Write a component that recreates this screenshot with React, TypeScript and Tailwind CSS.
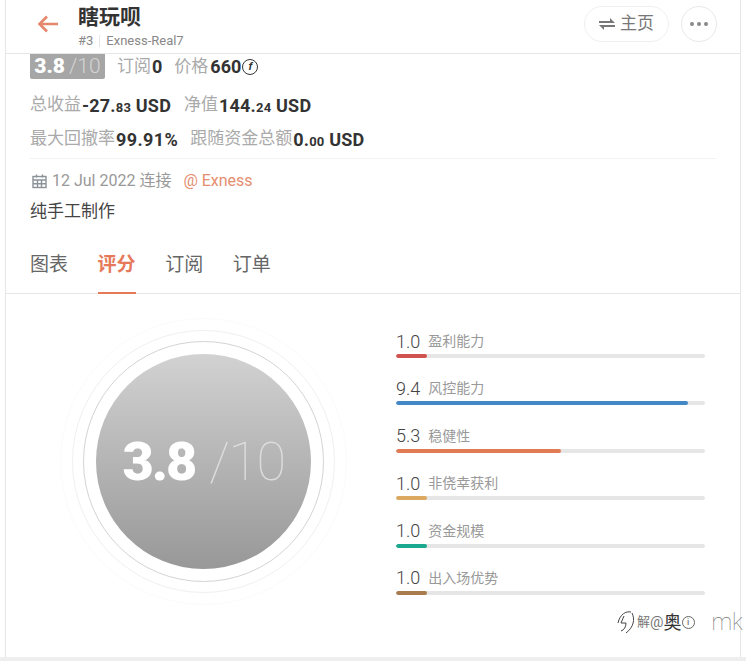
const FONT = "font-['Roboto','Noto_Sans_CJK_SC',sans-serif]";

const scores = [
  { value: "1.0", label: "盈利能力", width: "w-[10%]", color: "bg-[#d0534f]" },
  { value: "9.4", label: "风控能力", width: "w-[94.6%]", color: "bg-[#4288c5]" },
  { value: "5.3", label: "稳健性", width: "w-[53.4%]", color: "bg-[#e07b54]" },
  { value: "1.0", label: "非侥幸获利", width: "w-[10%]", color: "bg-[#dba95f]" },
  { value: "1.0", label: "资金规模", width: "w-[10%]", color: "bg-[#1aa88f]" },
  { value: "1.0", label: "出入场优势", width: "w-[10%]", color: "bg-[#a97c50]" },
];

const Money = ({ whole, cents }: { whole: string; cents: string }) => (
  <span className="font-bold text-[#333] text-[18px] tracking-[0.2px] ml-[1px] whitespace-nowrap">
    {whole}
    <span className="text-[13px]">{cents}</span> USD
  </span>
);

const App = () => {
  return (
    <div className={`${FONT} relative w-[751px] h-[661px] bg-white overflow-hidden pl-[5px] pr-[10px]`}>
      <div className="h-[657px] border-x border-[#e6e6e6] bg-white">
        <header className="h-[54px] border-b border-[#e6e6e6] flex items-center pl-[31px] pr-[23px]">
          <svg width="22" height="18" viewBox="0 0 22 18" fill="none" stroke="#e5876a" strokeWidth="2.6" className="mt-[-6px]">
            <path d="M21 9H2.5M10 1.5 2.5 9l7.5 7.5" />
          </svg>
          <div className="ml-[19px] flex flex-col mt-[-3px]">
            <div className="text-[21px] leading-[28px] font-bold text-[#333]">瞎玩呗</div>
            <div className="text-[13px] leading-[14px] mt-[3px] text-[#888] flex items-center">
              <span>#3</span>
              <span className="w-px h-[12px] bg-[#e6e6e6] mx-[6px]" />
              <span>Exness-Real7</span>
            </div>
          </div>
          <div className="ml-auto flex items-center gap-[12px] mt-[-5px]">
            <div className="h-[36px] w-[85px] rounded-full border border-[#f0f0f0] flex items-center justify-center gap-[5px] text-[#777] text-[17px]">
              <svg width="16" height="12" viewBox="0 0 16 12" fill="#777">
                <path d="M0 3h11V0l5 5H0zM0 7h16v2H5v3z" />
              </svg>
              <span>主页</span>
            </div>
            <div className="size-[36px] rounded-full border border-[#e8e8e8] flex items-center justify-center gap-[2.5px]">
              <span className="size-[4.5px] rounded-full bg-[#888]" />
              <span className="size-[4.5px] rounded-full bg-[#888]" />
              <span className="size-[4.5px] rounded-full bg-[#888]" />
            </div>
          </div>
        </header>

        <section className="px-[24px]">
          <div className="flex items-center h-[25px] text-[17px] text-[#aaa]">
            <span className="w-[75px] h-[25px] bg-[#a6a6a6] rounded-b-[2px] flex items-center justify-center text-[21px] leading-none">
              <span className="font-black text-white">3.8</span>
              <span className="text-[#d4d4d4] font-light ml-[4px]">/10</span>
            </span>
            <span className="ml-[12px]">订阅</span>
            <span className="font-bold text-[18px] text-[#333] ml-[1px]">0</span>
            <span className="ml-[12px]">价格</span>
            <span className="font-bold text-[18px] text-[#333] ml-[2px]">660</span>
            <span className="ml-[1px] size-[16px] rounded-full border-[1.5px] border-[#333] flex items-center justify-center text-[11px] font-bold italic text-[#333] leading-none">
              f
            </span>
          </div>

          <div className="mt-[13px] h-[26px] flex items-center text-[17px] text-[#aaa]">
            <span>总收益</span>
            <Money whole="-27." cents="83" />
            <span className="ml-[13px]">净值</span>
            <Money whole="144." cents="24" />
          </div>
          <div className="mt-[8px] h-[26px] flex items-center text-[17px] text-[#aaa]">
            <span>最大回撤率</span>
            <span className="font-bold text-[18px] tracking-[0.4px] text-[#333] ml-px">99.91%</span>
            <span className="ml-[12px]">跟随资金总额</span>
            <Money whole="0." cents="00" />
          </div>

          <div className="mt-[6px] border-t border-[#f2f2f2] pt-[12px]">
            <div className="h-[20px] flex items-center text-[16px] text-[#999]">
              <svg width="15" height="15" viewBox="0 0 15 15" fill="none" stroke="#8a9299" strokeWidth="1.4" className="ml-[2px] mr-[5px]">
                <rect x="1" y="2.5" width="13" height="11" />
                <path d="M4.5 0.5v3M10.5 0.5v3M1 6h13M5.5 6v7.5M9.5 6v7.5M1 9.7h13" />
              </svg>
              <span>12 Jul 2022 连接</span>
              <span className="ml-[12px] text-[#e58e6f]">@ Exness</span>
            </div>
            <div className="mt-[10px] text-[17px] leading-[20px] text-[#444]">纯手工制作</div>
          </div>
        </section>

        <nav className="mt-[20px] h-[53px] border-b border-[#e6e6e6] flex gap-[29.6px] px-[24px] text-[19px] text-[#666]">
          {["图表", "评分", "订阅", "订单"].map((tab) =>
            tab === "评分" ? (
              <span key={tab} className="h-[53px] pt-[10px] leading-[28px] font-bold text-[#e5795a] border-b-2 border-[#e5795a]">
                {tab}
              </span>
            ) : (
              <span key={tab} className="pt-[10px] leading-[28px]">
                {tab}
              </span>
            ),
          )}
        </nav>

        <section className="flex pt-[24px]">
          <div className="ml-[54px] size-[287px] rounded-full border border-[#fbfbfb] flex items-center justify-center shrink-0">
            <div className="size-[263px] rounded-full border border-[#f0f0f0] flex items-center justify-center">
              <div className="size-[241px] rounded-full border border-[#d4d4d4] flex items-center justify-center">
                <div className="size-[215px] rounded-full bg-gradient-to-b from-[#d2d2d2] to-[#989898] flex items-center justify-center leading-none">
                  <span className="text-[54px] font-black tracking-[-2px] text-white">3.8</span>
                  <span className="text-[54px] font-thin tracking-[-1.5px] text-[#dcdcdc] ml-[14px]">/10</span>
                </div>
              </div>
            </div>
          </div>
          <div className="ml-[49px] w-[309px] pt-[12px] flex flex-col gap-[19.4px]">
            {scores.map((score) => (
              <div key={score.label}>
                <div className="flex items-center h-[23px]">
                  <span className="text-[18px] font-light text-[#444] leading-none">{score.value}</span>
                  <span className="ml-[8px] text-[14px] text-[#999]">{score.label}</span>
                </div>
                <div className="h-[4px] bg-[#e6e6e6] mt-[1px] rounded-full overflow-hidden">
                  <div className={`h-full rounded-full ${score.width} ${score.color}`} />
                </div>
              </div>
            ))}
          </div>
        </section>
      </div>
      <div className="h-[4px] -mx-[5px] bg-[#eeeeee]" />

      {/* watermark over the bottom corner */}
      <div className="absolute left-[617px] top-[608px] w-[126px] h-[28px] flex items-center text-[#555] overflow-hidden">
        <svg width="20" height="28" viewBox="0 0 20 28" fill="none" stroke="#444" strokeWidth="1">
          <path d="M1 15C3 6 9 3 14 4M7 8l-3 7h5M9 15c0 4-2 7-5 8M15 5c3 6 2 14-6 20" />
        </svg>
        <span className="text-[13px] text-[#777]">解</span>
        <span className="text-[15px] text-[#777]">@</span>
        <span className="text-[18px] text-[#333]">奥</span>
        <span className="size-[13px] rounded-full border border-[#666] text-[9px] leading-[11px] text-center">i</span>
        <span className="ml-auto text-[23px] font-thin text-[#777] leading-none">mk</span>
      </div>
    </div>
  );
};

export default App;
